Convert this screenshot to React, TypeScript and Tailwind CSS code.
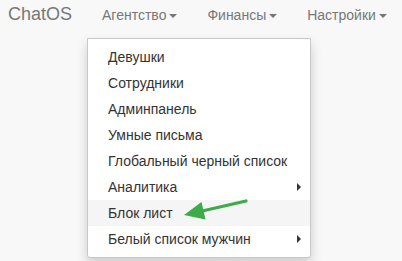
import React from "react";

const font = { fontFamily: '"Liberation Sans", Arial, Helvetica, sans-serif' };

function Caret() {
  return (
    <span className="ml-[3px] inline-block h-0 w-0 border-x-[4px] border-t-[4px] border-x-transparent border-t-[#777] align-middle" />
  );
}

function SubCaret() {
  return (
    <span className="inline-block h-0 w-0 border-y-[4px] border-l-[4px] border-y-transparent border-l-[#333]" />
  );
}

const items: { label: string; sub?: boolean; active?: boolean }[] = [
  { label: "Девушки" },
  { label: "Сотрудники" },
  { label: "Админпанель" },
  { label: "Умные письма" },
  { label: "Глобальный черный список" },
  { label: "Аналитика", sub: true },
  { label: "Блок лист", active: true },
  { label: "Белый список мужчин", sub: true },
];

export default function App() {
  return (
    <div className="relative h-[261px] w-[402px] overflow-hidden bg-[#f8f8f8]" style={font}>
      <nav className="flex h-[38px] items-start">
        <div className="pl-[8px] pr-[15px] pt-[4px] text-[18px] leading-[20px] text-[#777]">ChatOS</div>
        <div className="relative h-[38px] px-[15px] pt-[5px] text-[14px] leading-[20px] text-[#777]">
          Агентство
          <Caret />
          <div className="absolute left-0 top-full z-10 w-[224px] rounded-b-[3px] border border-[#c8c8c8] bg-white py-[5px] shadow-[0_6px_12px_rgba(0,0,0,0.175)]">
            {items.map((it) => (
              <div
                key={it.label}
                className={`flex h-[26px] items-center justify-between pl-[20px] pr-[9px] text-[14px] leading-[20px] text-[#333] ${it.active ? "bg-[#f5f5f5]" : ""}`}
              >
                <span>{it.label}</span>
                {it.sub ? <SubCaret /> : null}
              </div>
            ))}
          </div>
        </div>
        <div className="px-[15px] pt-[5px] text-[14px] leading-[20px] text-[#777]">
          Финансы
          <Caret />
        </div>
        <div className="px-[15px] pt-[5px] text-[14px] leading-[20px] text-[#777]">
          Настройки
          <Caret />
        </div>
      </nav>
      <svg className="absolute left-0 top-0 z-20" width="402" height="261" viewBox="0 0 402 261">
        <line x1="246" y1="201" x2="200" y2="211.5" stroke="#3dab4a" strokeWidth="3.2" strokeLinecap="round" />
        <polygon points="184,215 201.5,202 205.5,219.5" fill="#3dab4a" />
      </svg>
    </div>
  );
}
